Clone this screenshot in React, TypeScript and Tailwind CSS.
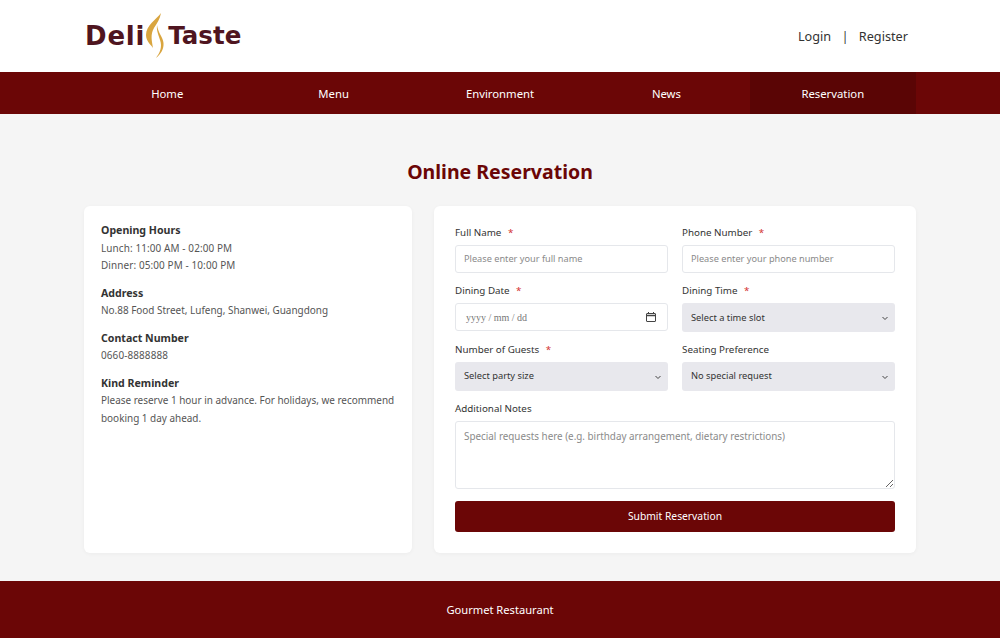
import React from "react";

const font = { fontFamily: '"Noto Sans", "Noto Sans CJK SC", sans-serif' };

function Field({ label, req, children, className = "" }: { label: string; req?: boolean; children: React.ReactNode; className?: string }) {
  return (
    <div className={className}>
      <label className="block text-[9.8px] leading-[16px] mb-[4px] text-[#333333] h-[16px]">
        {label}
        {req && <span className="text-[#d32f2f] ml-[6.5px]">*</span>}
      </label>
      {children}
    </div>
  );
}

const inputCls = "block w-full h-[28px] border border-[#e5e7eb] rounded-[3px] bg-white px-[8px] text-[9.2px] text-[#333] placeholder:text-[#8a8a8a] outline-none";

function Select({ text }: { text: string }) {
  return (
    <div className="relative h-[28.5px] -mb-[0.5px]">
      <select className="block w-full h-full rounded-[3px] bg-[#e8e8ed] pl-[9px] pr-[20px] text-[9.3px] text-[#333] outline-none appearance-none">
        <option>{text}</option>
      </select>
      <svg width="8" height="8" viewBox="0 0 8 8" fill="none" stroke="#444" strokeWidth="1" className="absolute right-[6px] top-[10.5px] pointer-events-none">
        <path d="M1.5 3l2.5 2.5L6.5 3" />
      </svg>
    </div>
  );
}

function Info({ title, lines, wide }: { title: string; lines: string[]; wide?: boolean }) {
  return (
    <div className="mb-[10px]">
      <h3 className="text-[10.6px] leading-[16px] font-bold text-[#333] mb-[1.5px]">{title}</h3>
      {lines.map((l) => (
        <p key={l} className={`text-[9.95px] leading-[17.5px] text-[#555] whitespace-nowrap ${wide ? "tracking-[0.11px]" : ""}`}>{l}</p>
      ))}
    </div>
  );
}

export default function App() {
  const nav = ["Home", "Menu", "Environment", "News", "Reservation"];
  return (
    <div style={font} className="w-full min-h-[638px] bg-[#f5f5f5] flex flex-col">
      <header className="h-[72px] bg-white">
        <div className="w-[832px] mx-auto h-full flex items-center justify-between">
          <div className="flex items-center h-full text-[#4f1520] font-bold leading-none" style={{ fontFamily: '"DejaVu Sans", sans-serif' }}>
            <span className="ml-[1px] text-[26px] tracking-[0.8px]">Deli</span>
            <svg width="22" height="48" viewBox="0 0 22 48" className="mt-[-2px] shrink-0">
              <path d="M16 2 C12 8 1 14 1 24 C1 30 6 34 8 37 C7 30 5 24 9 17 C12 12 15 8 16 2 Z" fill="#d9a53f" />
              <path d="M12 14 C11 22 16 28 16 34 C16 40 13 44 11 47 C16 43 19 38 18.5 32 C18 26 13 22 12 14 Z" fill="#d9a53f" />
            </svg>
            <span className="ml-[1px] text-[24.5px]">Taste</span>
          </div>
          <div className="flex items-center text-[12.7px] text-[#333] pr-[8px] pt-[2px]">
            <span>Login</span>
            <span className="mx-[10.5px] text-[12px]">|</span>
            <span>Register</span>
          </div>
        </div>
      </header>
      <nav className="h-[42px] bg-[#6b0606]">
        <div className="w-[832px] mx-auto h-full grid grid-cols-5">
          {nav.map((n, i) => (
            <div key={n} className={`flex items-center justify-center pt-[2px] text-white text-[11.3px] ${i === 4 ? "bg-[#5a0505]" : ""}`}>
              {n}
            </div>
          ))}
        </div>
      </nav>
      <main className="flex-1 w-[832px] mx-auto pt-[42px]">
        <h2 className="text-center text-[19.5px] leading-[32px] font-bold text-[#6b0606] mb-[18px]">Online Reservation</h2>
        <div className="flex gap-[22px] h-[347px]">
          <aside className="w-[328px] bg-white rounded-[6px] pt-[16px] px-[17px] shadow-[0_1px_4px_rgba(0,0,0,0.04)]">
            <Info title="Opening Hours" wide lines={["Lunch: 11:00 AM - 02:00 PM", "Dinner: 05:00 PM - 10:00 PM"]} />
            <Info title="Address" lines={["No.88 Food Street, Lufeng, Shanwei, Guangdong"]} />
            <Info title="Contact Number" wide lines={["0660-8888888"]} />
            <Info title="Kind Reminder" lines={["Please reserve 1 hour in advance. For holidays, we recommend", "booking 1 day ahead."]} />
          </aside>
          <section className="flex-1 bg-white rounded-[6px] pt-[18.5px] px-[21px] shadow-[0_1px_4px_rgba(0,0,0,0.04)]">
            <div className="grid grid-cols-2 gap-x-[14px] gap-y-[10.8px]">
              <Field label="Full Name" req>
                <input className={inputCls} placeholder="Please enter your full name" />
              </Field>
              <Field label="Phone Number" req>
                <input className={inputCls} placeholder="Please enter your phone number" />
              </Field>
              <Field label="Dining Date" req>
                <div className="flex items-center justify-between h-[28px] border border-[#e5e7eb] rounded-[3px] pl-[10px] pr-[10px] text-[10px] text-[#777]">
                  <span style={{ fontFamily: '"Liberation Serif", serif' }}>yyyy / mm / dd</span>
                  <svg width="12" height="12" viewBox="0 0 12 12" fill="none" stroke="#444" strokeWidth="1">
                    <rect x="1.5" y="2.5" width="9" height="8" rx="0.5" />
                    <path d="M1.5 4.5h9" strokeWidth="1.5" />
                    <path d="M3.5 1v2M8.5 1v2" />
                  </svg>
                </div>
              </Field>
              <Field label="Dining Time" req>
                <Select text="Select a time slot" />
              </Field>
              <Field label="Number of Guests" req>
                <Select text="Select party size" />
              </Field>
              <Field label="Seating Preference">
                <Select text="No special request" />
              </Field>
              <Field label="Additional Notes" className="col-span-2">
                <textarea className="block w-full h-[68px] border border-[#e5e7eb] rounded-[3px] px-[8px] py-[7px] text-[9.85px] placeholder:text-[#8a8a8a] outline-none" placeholder="Special requests here (e.g. birthday arrangement, dietary restrictions)" />
              </Field>
            </div>
            <button className="block w-full h-[31px] mt-[12px] rounded-[3px] bg-[#6b0606] text-white text-[10.3px]">Submit Reservation</button>
          </section>
        </div>
      </main>
      <footer className="h-[57px] bg-[#6b0606] flex items-center justify-center pt-[2px] text-white text-[11.15px]">Gourmet Restaurant</footer>
    </div>
  );
}
